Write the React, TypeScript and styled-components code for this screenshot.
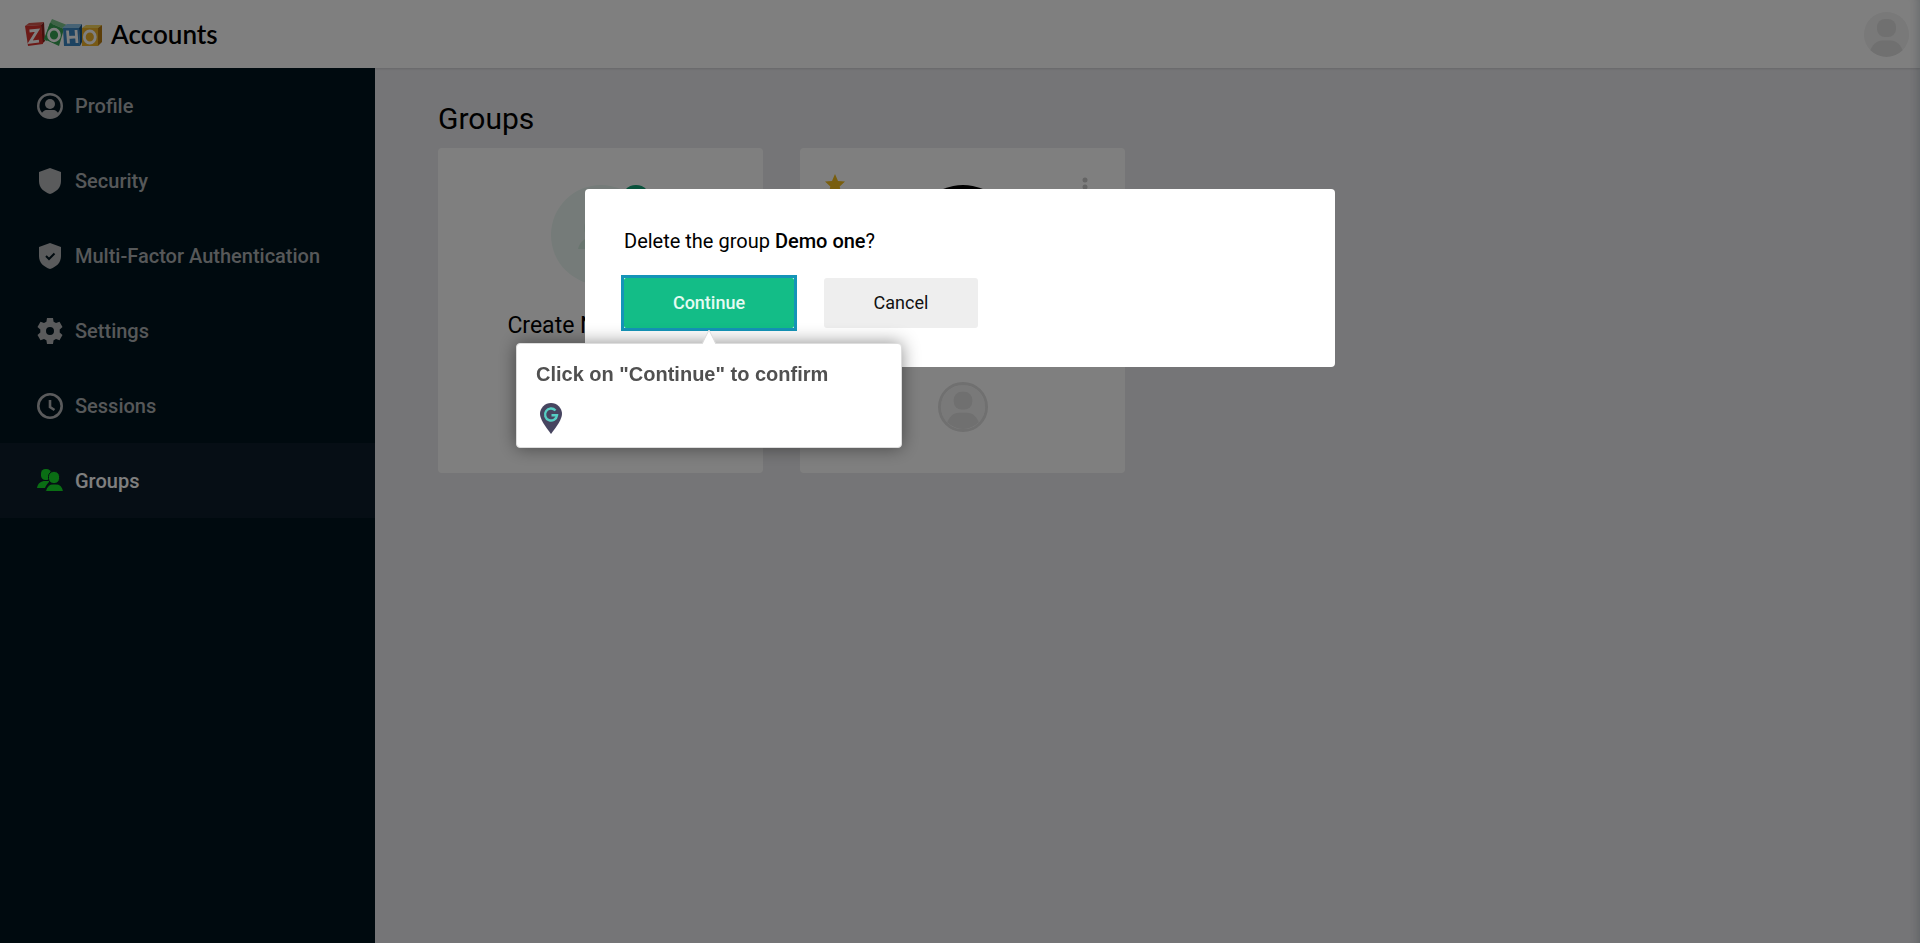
import React from "react";
import styled, { createGlobalStyle, css } from "styled-components";

const GlobalStyle = createGlobalStyle`
  *, *::before, *::after { box-sizing: border-box; }
  body {
    margin: 0;
    background: #ebebee;
    color: #000;
    font-family: Roboto, "Liberation Sans", sans-serif;
    font-size: 20px;
  }
  h1, h2, p, ul { margin: 0; padding: 0; font-weight: 400; }
  svg { display: block; }
`;

const Page = styled.div`
  display: flex;
  flex-direction: column;
  min-height: 100vh;
`;

const Header = styled.header`
  display: flex;
  align-items: center;
  justify-content: space-between;
  height: 68px;
  padding: 0 11px 0 24px;
  background: #fff;
  box-shadow: 0 1px 2px rgba(0, 0, 0, 0.12);
`;

const Brand = styled.a`
  display: flex;
  align-items: center;
  gap: 8px;
  color: #000;
  text-decoration: none;
  font: 600 26px/32px Lato, sans-serif;
`;

const AvatarButton = styled.button`
  width: 45px;
  height: 45px;
  padding: 0;
  border: 0;
  border-radius: 50%;
  overflow: hidden;
  background: #f4f4f4;
`;

const Body = styled.div`
  display: flex;
  flex: 1;
`;

const Sidebar = styled.nav`
  flex: 0 0 375px;
  background: #00141e;
`;

const NavList = styled.ul`
  list-style: none;
`;

const NavLink = styled.a<{ $active?: boolean }>`
  display: flex;
  align-items: center;
  gap: 12px;
  height: 75px;
  padding: 0 37px;
  color: #acb0b2;
  font-weight: 500;
  line-height: 24px;
  text-decoration: none;
  svg { fill: #b4b6b8; }
  ${(p) =>
    p.$active &&
    css`
      background: #0c1c2a;
      color: #fff;
      svg { fill: #14dc28; }
    `}
`;

const Main = styled.main`
  flex: 1;
  padding: 33px 63px;
`;

const Title = styled.h1`
  font-size: 30px;
  line-height: 36px;
`;

const Cards = styled.div`
  display: flex;
  flex-wrap: wrap;
  gap: 37px;
  padding-top: 11px;
`;

const Card = styled.section`
  position: relative;
  display: flex;
  flex-direction: column;
  align-items: center;
  width: 325px;
  min-height: 325px;
  padding: 37px 24px;
  border-radius: 4px;
  background: #fff;
`;

const CardName = styled.h2`
  padding-top: 28px;
  font-size: 23px;
  line-height: 26px;
`;

const Starred = styled.span`
  position: absolute;
  top: 24px;
  left: 23px;
`;

const MenuButton = styled.button`
  position: absolute;
  top: 24px;
  right: 32px;
  padding: 0;
  border: 0;
  background: none;
`;

const Members = styled.div`
  padding-top: 43px;
`;

const Overlay = styled.div`
  position: fixed;
  inset: 0;
  display: flex;
  align-items: flex-start;
  justify-content: center;
  padding-top: 189px;
  background: rgba(0, 0, 0, 0.5);
  box-shadow: inset -10px 0 10px -8px rgba(0, 20, 30, 0.2);
`;

const Dialog = styled.div`
  width: 750px;
  padding: 40px 39px 39px;
  border-radius: 4px;
  background: #fff;
`;

const Question = styled.p`
  line-height: 24px;
  b { font-weight: 500; }
`;

const Actions = styled.div`
  display: flex;
  gap: 30px;
  padding-top: 25px;
`;

const Anchor = styled.div`
  position: relative;
  outline: 3px solid #1494b8;
`;

const Button = styled.button<{ $primary?: boolean }>`
  display: block;
  height: 50px;
  padding: 0;
  width: ${(p) => (p.$primary ? 170 : 154)}px;
  border: 0;
  border-radius: ${(p) => (p.$primary ? 2 : 3)}px;
  background: ${(p) => (p.$primary ? "#13bd87" : "#eeeeee")};
  color: ${(p) => (p.$primary ? "#e4fbf2" : "#111")};
  font: ${(p) => (p.$primary ? 500 : 400)} 18px/24px Roboto, sans-serif;
`;

const Tip = styled.div`
  position: absolute;
  top: 65px;
  left: 50%;
  width: 386px;
  margin-left: -193px;
  padding: 18px 19px 13px;
  border: 1px solid #ddd;
  border-radius: 4px;
  background: #fff;
  box-shadow: 0 0 18px rgba(0, 0, 0, 0.45);
  color: #505050;
`;

const TipArrow = styled.svg`
  position: absolute;
  top: -14px;
  left: 50%;
  margin-left: -7px;
`;

const TipText = styled.p`
  font: 700 20px/24px "Liberation Sans", sans-serif;
`;

const TipMark = styled.div`
  padding: 17px 4px 0;
`;

const Person = ({ size, ring }: { size: number; ring?: boolean }) => (
  <svg width={size} height={size} viewBox="0 0 45 45" aria-hidden="true">
    <defs>
      <clipPath id={`face${size}`}>
        <circle cx="22.5" cy="22.5" r="22.5" />
      </clipPath>
    </defs>
    <g clipPath={`url(#face${size})`} transform={ring ? "translate(2.7 2.7) scale(.88)" : undefined}>
      <rect width="45" height="45" fill="#f2f2f2" />
      <rect x="13" y="7" width="19" height="18" rx="8" fill="#e0e0e0" />
      <path d="M5 45V42C8 32 13 28.500 18 28.500h9c5 0 10 3.500 13 13.500v3z" fill="#e0e0e0" />
    </g>
    {ring && <circle cx="22.5" cy="22.5" r="21.200" fill="none" stroke="#e0e0e0" strokeWidth="2.600" />}
  </svg>
);

const ZohoLogo = () => (
  <svg width="79" height="30" viewBox="0 0 79 30" aria-hidden="true">
    <path d="M1 7l4-3 15-1-3 3z" fill="#d5564d" />
    <path d="M17 6l3-3 1 19-3 3z" fill="#8e1f1c" />
    <path d="M1 7l16-1 2 19-15 2z" fill="#d8352f" />
    <path d="M26 4l2-4 15 6-3 4z" fill="#7cc68d" />
    <path d="M26 4l-6 17 3 1 5-18z" fill="#5fb878" />
    <path d="M26 4l14 6-5 17-15-7z" fill="#38a355" />
    <path d="M38 9l5-4h15l-3 4z" fill="#8ec6ea" />
    <path d="M55 9l3-4v18l-2 4z" fill="#1b5685" />
    <path d="M39 9h16l1 18-16 0z" fill="#3a86c2" />
    <path d="M58 9l4-3h16l-4 3z" fill="#f4d55c" />
    <path d="M74 9l4-3v17l-4 4z" fill="#b97d12" />
    <path d="M58 9h16v18H58z" fill="#efb32a" />
    <g fill="none" stroke="#fff" strokeWidth="2.8">
      <path d="M5.500 12l8-.8-7.500 12 9-1" />
      <ellipse cx="30" cy="16" rx="5.500" ry="5.800" />
      <path d="M43.500 11.500l1 13M52 11l1 13M44 18.500l8.500-.7" />
      <ellipse cx="65.800" cy="18" rx="5.500" ry="6" />
    </g>
  </svg>
);

const SHIELD = "M13 0l11 4v9c0 7-5 11-11 13C7 24 2 20 2 13V4z";

const icons: Record<string, React.ReactNode> = {
  Profile: (
    <>
      <path fillRule="evenodd" d="M13 0a13 13 0 1 0 0 26 13 13 0 0 0 0-26zm0 2.500a10.500 10.500 0 0 1 8 17.300C19.500 17.500 17.500 17 16 17h-6c-1.500 0-3.500.5-5 2.800A10.500 10.500 0 0 1 13 2.500z" />
      <circle cx="13" cy="11" r="5" />
    </>
  ),
  Security: <path d={SHIELD} />,
  "Multi-Factor Authentication": (
    <>
      <path d={SHIELD} />
      <path d="M9 13l3 3 5.500-5.500" style={{ fill: "none" }} stroke="#00141e" strokeWidth="2" />
    </>
  ),
  Settings: (
    <path
      fillRule="evenodd"
      d="M10 0h6l.6 3.700 2.400 1.400 3.500-1.300 3 5.200-2.800 2.400v3.200l2.800 2.400-3 5.200-3.500-1.300-2.400 1.400L16 26h-6l-.6-3.700L7 20.900l-3.500 1.300-3-5.200 2.800-2.400v-3.200L.5 9l3-5.200L7 5.100l2.400-1.400zM13 9a4 4 0 1 0 0 8 4 4 0 0 0 0-8z"
    />
  ),
  Sessions: (
    <g style={{ fill: "none" }} stroke="#b4b6b8">
      <circle cx="13" cy="13" r="11.700" strokeWidth="2.600" />
      <path d="M13 7v7l4.500 3" strokeWidth="2.600" />
    </g>
  ),
  Groups: (
    <>
      <rect x="4" y="1" width="10" height="11" rx="4.500" />
      <path d="M0 20c1-5 4-7 8-7h5c-2 2-4 4-5 7z" />
      <g stroke="#0c1c2a">
        <rect x="11.500" y="3.500" width="11" height="12" rx="5" />
        <path d="M8.500 23.500c1-5 4-7.500 7.500-7.500h3c4 0 6.500 2.500 7.500 7.500z" />
      </g>
    </>
  ),
};

const AddGroup = () => (
  <svg width="100" height="100" viewBox="0 0 100 100" aria-hidden="true">
    <circle cx="50" cy="50" r="50" fill="#eaf7f2" />
    <rect x="33" y="34" width="16" height="18" rx="8" fill="#d9efe5" />
    <path d="M27 64c2-8 7-11 13-11h8c6 0 11 3 13 11z" fill="#d3eade" />
    <circle cx="85" cy="15" r="15" fill="#13a377" />
    <path d="M85 8v14M78 15h14" stroke="#fff" strokeWidth="2" />
  </svg>
);

export default function App() {
  return (
    <>
      <GlobalStyle />
      <Page>
        <Header>
          <Brand href="#home">
            <ZohoLogo />
            Accounts
          </Brand>
          <AvatarButton aria-label="Account">
            <Person size={45} />
          </AvatarButton>
        </Header>
        <Body>
          <Sidebar>
            <NavList>
              {Object.entries(icons).map(([label, icon]) => (
                <li key={label}>
                  <NavLink href="#nav" $active={label === "Groups"}>
                    <svg width="26" height="26" viewBox="0 0 26 26" aria-hidden="true">
                      {icon}
                    </svg>
                    {label}
                  </NavLink>
                </li>
              ))}
            </NavList>
          </Sidebar>
          <Main>
            <Title>Groups</Title>
            <Cards>
              <Card>
                <AddGroup />
                <CardName>Create New Group</CardName>
              </Card>
              <Card>
                <Starred>
                  <svg width="24" height="24" viewBox="0 0 24 24" aria-hidden="true">
                    <path d="M12 2l3 7 7 .6-5.300 4.800L18.300 22 12 18l-6.300 4 1.600-7.600L2 9.600 9 9z" fill="#f2bd1d" />
                  </svg>
                </Starred>
                <MenuButton aria-label="Group menu">
                  <svg width="16" height="24" viewBox="0 0 16 24" fill="#c8c8c8">
                    <circle cx="8" cy="8" r="2.500" />
                    <circle cx="8" cy="15" r="2.500" />
                    <circle cx="8" cy="22" r="2.500" />
                  </svg>
                </MenuButton>
                <svg width="100" height="100" viewBox="0 0 100 100" aria-hidden="true">
                  <circle cx="50" cy="50" r="50" />
                </svg>
                <CardName>Demo one</CardName>
                <Members>
                  <Person size={50} ring />
                </Members>
              </Card>
            </Cards>
          </Main>
        </Body>
      </Page>
      <Overlay>
        <Dialog role="dialog" aria-modal="true" aria-labelledby="question">
          <Question id="question">
            Delete the group <b>Demo one</b>?
          </Question>
          <Actions>
            <Anchor>
              <Button $primary>Continue</Button>
              <Tip role="tooltip">
                <TipArrow width="14" height="15" viewBox="0 0 14 15" aria-hidden="true">
                  <path d="M7 0l7 15H0z" fill="#fff" />
                  <path d="M0 14L7 0l7 14" fill="none" stroke="#ddd" />
                </TipArrow>
                <TipText>Click on "Continue" to confirm</TipText>
                <TipMark>
                  <svg width="22" height="31" viewBox="0 0 22 31" aria-hidden="true">
                    <path d="M11 0a11 11 0 0 1 11 11c0 5-5 12-11 20C5 23 0 16 0 11A11 11 0 0 1 11 0z" fill="#474560" />
                    <path d="M15.500 7.500A6 6 0 1 0 17 12.300h-5.500" fill="none" stroke="#56cfc4" strokeWidth="2.400" />
                  </svg>
                </TipMark>
              </Tip>
            </Anchor>
            <Button>Cancel</Button>
          </Actions>
        </Dialog>
      </Overlay>
    </>
  );
}
